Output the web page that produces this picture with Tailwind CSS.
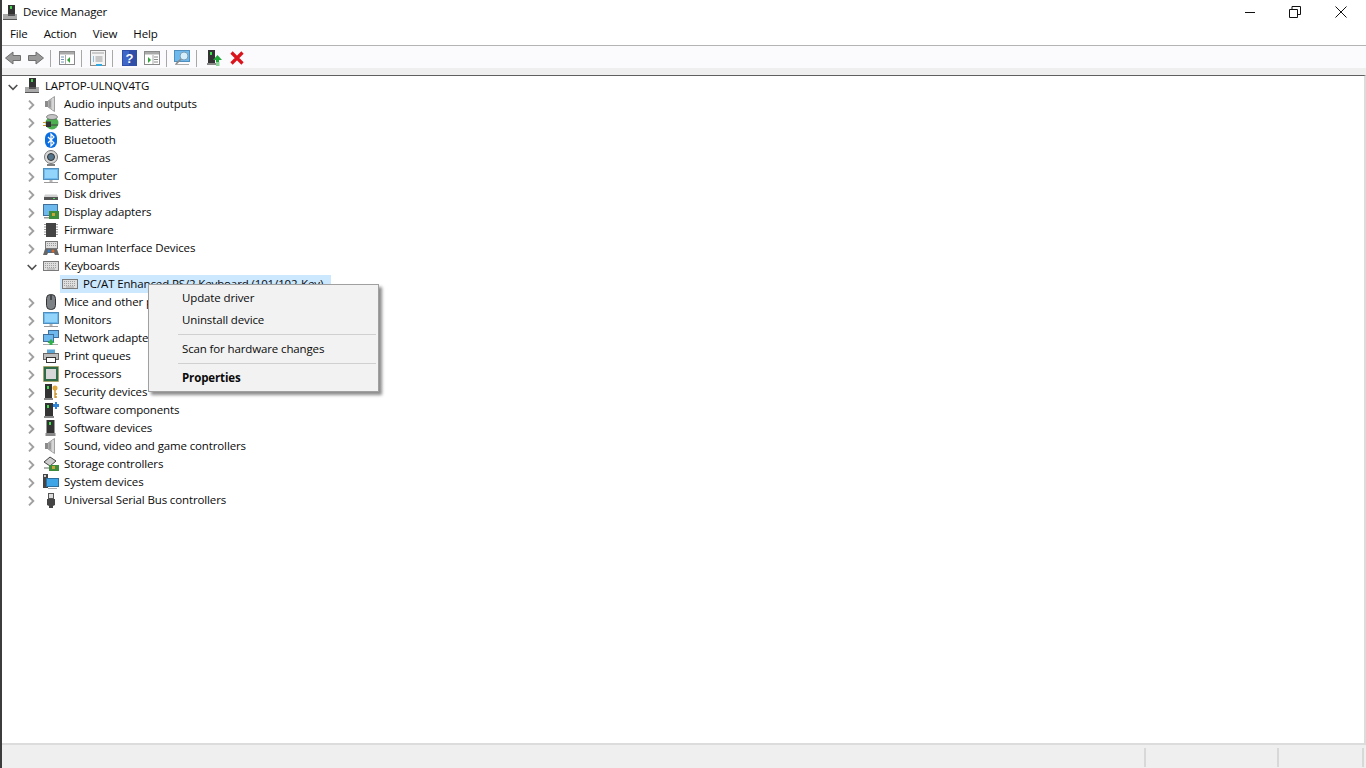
<!DOCTYPE html>
<html><head><meta charset="utf-8"><title>Device Manager</title>
<script src="https://cdn.jsdelivr.net/npm/@tailwindcss/browser@4"></script></head>
<body class="bg-white">
<svg class="hidden" width="0" height="0">
<defs>
<symbol id="chev" viewBox="0 0 10 10"><path d="M3 .7l4.300 4.300L3 9.300" fill="none" stroke="#a0a0a0" stroke-width="1.900"/></symbol>
<symbol id="chevd" viewBox="0 0 10 10"><path d="M.7 3l4.300 4.300L9.300 3" fill="none" stroke="#505050" stroke-width="1.600"/></symbol>
<symbol id="speaker" viewBox="0 0 16 16"><rect x="2" y="5" width="3" height="6" fill="#8a8a8a"/><path d="M5 5l6.500-4.500v15L5 11z" fill="#c4c4c4" stroke="#8f8f8f" stroke-width=".8"/><path d="M7 4.500v7" stroke="#8e8e8e" stroke-width="1.500"/><path d="M10 2v12" stroke="#e8e8e8"/></symbol>
<symbol id="monitor" viewBox="0 0 16 16"><rect x=".5" y=".5" width="15" height="11" fill="#6db9ee" stroke="#4f8fbe"/><rect x="2" y="2" width="12" height="8" fill="#92d4fa"/><rect x="6.500" y="12" width="3" height="2" fill="#b5b5b5"/><rect x="1" y="14" width="14" height="1" fill="#9a9a9a"/></symbol>
<symbol id="kbd" viewBox="0 0 16 16"><rect x=".5" y="3.500" width="15" height="9" fill="#dedede" stroke="#7a7a7a"/><path d="M2 5.500h12M2 7.500h12M2 9.500h12" stroke="#a0a0a0" stroke-dasharray="1 1"/><path d="M4 11h8" stroke="#a6a6a6"/></symbol>
<symbol id="tower" viewBox="0 0 16 16"><rect x="3.500" y="0" width="8" height="13" fill="#333"/><rect x="6" y="2" width="2" height="3" fill="#3fe04b"/><rect x="2.500" y="13" width="10" height="3" fill="#8a8a8a"/></symbol>
</defs>
</svg>
<div class="relative flex h-[768px] w-[1366px] flex-col overflow-hidden border-l-2 border-[#3c3c3c] font-['Open_Sans','Noto_Sans',sans-serif] text-[11.5px] tracking-[-0.13px] text-[#0a0a0a]">
  <!-- title bar -->
  <div class="flex h-[23px] items-center">
    <svg class="ml-[1px] h-[16px] w-[14px]" viewBox="0 0 14 16"><rect x="5" y="1" width="7" height="10" fill="#333"/><rect x="7" y="2" width="2" height="3" fill="#43d04f"/><rect x="0" y="10" width="14" height="6" fill="#a9a9a9"/><rect x="0" y="15" width="14" height="1" fill="#555"/><rect x="5" y="10" width="7" height="2" fill="#555"/></svg>
    <span class="ml-[6px]">Device Manager</span>
    <div class="ml-auto flex h-full items-center pr-[2px]">
      <svg class="mr-[33px] h-[12px] w-[12px]" viewBox="0 0 12 12"><path d="M1 6.500h10" stroke="#111"/></svg>
      <svg class="mr-[34px] h-[12px] w-[12px]" viewBox="0 0 12 12"><path d="M.5 3.500h8v8h-8zM3 3.500V.5h8.500v8H8.500" fill="none" stroke="#111"/></svg>
      <svg class="mr-[17px] h-[12px] w-[12px]" viewBox="0 0 12 12"><path d="M.5.5l11 11M11.500.5l-11 11" stroke="#111"/></svg>
    </div>
  </div>
  <!-- menu -->
  <div class="flex h-[23px] items-center gap-[16px] border-b border-[#b4b4b4] pl-[8px]">
    <span>File</span><span>Action</span><span>View</span><span>Help</span>
  </div>
  <!-- toolbar -->
  <div class="flex h-[22px] items-center bg-[#fbfbfd] pt-[2px]">
    <svg class="ml-[3px] h-[16px] w-[16px]" viewBox="0 0 16 16"><path d="M.5 8L8 2v3.500h7.500v5H8V14z" fill="#9a9a9a" stroke="#6e6e6e"/></svg>
    <svg class="ml-[7px] h-[16px] w-[16px]" viewBox="0 0 16 16"><path d="M15.500 8L8 2v3.500H.5v5H8V14z" fill="#9a9a9a" stroke="#6e6e6e"/></svg>
    <div class="ml-[6px] h-[17px] w-px bg-[#a8a8a8]"></div>
    <svg class="ml-[8px] h-[16px] w-[16px]" viewBox="0 0 16 16"><rect x=".5" y="1.500" width="15" height="13" fill="#fff" stroke="#8a8a8a"/><rect x="1" y="2" width="14" height="2.500" fill="#a9a9a9"/><path d="M2 7h3M2 9.500h3M2 12h3" stroke="#7396b8"/><path d="M6.500 5v9" stroke="#aaa"/><path d="M11 7v6L8 10z" fill="#35a33c"/></svg>
    <div class="ml-[6px] h-[17px] w-px bg-[#a8a8a8]"></div>
    <svg class="ml-[8px] h-[16px] w-[16px]" viewBox="0 0 16 16"><rect x=".5" y=".5" width="15" height="15" fill="#f4f4f4" stroke="#8c8c8c"/><rect x="2" y="2" width="12" height="2" fill="#ccc"/><path d="M3 7h1M3 9h1M3 11h1" stroke="#2a8fd0"/><path d="M5.500 7h7M5.500 9h7M5.500 11h7" stroke="#999"/><rect x="6" y="14" width="6" height="2" fill="#31a8e0"/></svg>
    <div class="ml-[6px] h-[17px] w-px bg-[#a8a8a8]"></div>
    <svg class="ml-[9px] h-[16px] w-[15px]" viewBox="0 0 15 16"><rect width="15" height="16" fill="#2f4fa8"/><rect x="1" y="1" width="6" height="14" fill="#3e67c8"/><text x="7.500" y="13" text-anchor="middle" font-size="13" font-weight="700" fill="#fff" font-family="Liberation Sans">?</text></svg>
    <svg class="ml-[7px] h-[16px] w-[16px]" viewBox="0 0 16 16"><rect x=".5" y="1.500" width="15" height="13" fill="#fff" stroke="#8a8a8a"/><rect x="1" y="2" width="14" height="2.500" fill="#a9a9a9"/><path d="M10 7h4M10 9.500h4M10 12h4" stroke="#8a8a8a"/><path d="M9 5v9" stroke="#aaa"/><path d="M4 7v6l3-3z" fill="#35a33c"/></svg>
    <div class="ml-[6px] h-[17px] w-px bg-[#a8a8a8]"></div>
    <svg class="ml-[7px] h-[16px] w-[16px]" viewBox="0 0 16 16"><rect x=".5" y=".5" width="15" height="11" fill="#6db9ee" stroke="#4f8fbe"/><rect x="1" y="14" width="14" height="1" fill="#aaa"/><circle cx="10" cy="6" r="4" fill="#d5eefb" stroke="#7a9db5"/><path d="M7 9l-5 5" stroke="#8a8a8a" stroke-width="1.700"/></svg>
    <div class="ml-[6px] h-[17px] w-px bg-[#a8a8a8]"></div>
    <svg class="ml-[10px] h-[16px] w-[16px]" viewBox="0 0 16 16"><rect x="1" y="0" width="7" height="13" fill="#333"/><rect x="3" y="2" width="2" height="3" fill="#3fe04b"/><rect x="0" y="13" width="9" height="2" fill="#888"/><path d="M10.500 5l4.500 5h-3v2H9v-2H6z" fill="#22a838"/><path d="M9 13h3.500M9 15h3.500" stroke="#22a838"/></svg>
    <svg class="ml-[6px] h-[16px] w-[16px]" viewBox="0 0 16 16"><path d="M2.500 2.500l11 11M13.500 2.500l-11 11" stroke="#d9141c" stroke-width="3.200"/></svg>
  </div>
  <div class="h-[7px] bg-[#efefef]"></div>
  <!-- tree -->
  <div class="flex-1 border-t border-t-[#5f5f5f] border-r-2 border-r-[#dcdcdc] border-b-2 border-b-[#dcdcdc] pt-px">
    <div class="flex h-[18px] items-center pl-[6px]">
      <svg class="mt-[1px] h-[10px] w-[10px]"><use href="#chevd"/></svg>
      <svg class="ml-[7px] h-[16px] w-[14px]" viewBox="0 0 14 16"><rect x="4" y="0" width="7" height="10" fill="#333"/><rect x="6" y="1" width="2" height="3" fill="#43d04f"/><rect x="0" y="9" width="14" height="6" fill="#a9a9a9"/><rect x="0" y="14" width="14" height="1" fill="#555"/><rect x="4" y="9" width="7" height="2" fill="#555"/></svg>
      <span class="ml-[6px]">LAPTOP-ULNQV4TG</span>
    </div>
    <div class="flex h-[18px] items-center pl-[24px]"><svg class="mt-[2px] h-[10px] w-[10px]"><use href="#chev"/></svg><svg class="ml-[7px] h-[16px] w-[16px]"><use href="#speaker"/></svg><span class="ml-[5px]">Audio inputs and outputs</span></div>
    <div class="flex h-[18px] items-center pl-[24px]"><svg class="mt-[2px] h-[10px] w-[10px]"><use href="#chev"/></svg><svg class="ml-[7px] h-[16px] w-[16px]" viewBox="0 0 16 16"><circle cx="9" cy="9" r="6.500" fill="#4caf50"/><ellipse cx="9" cy="3" rx="5.500" ry="2.500" fill="#c4c4c4" stroke="#555" stroke-width=".6"/><path d="M0 8.500h3M0 11.500h3" stroke="#c99a2e"/><path d="M3 7.500h5v5.500H3z" fill="#333"/><path d="M8 11h7" stroke="#444"/></svg><span class="ml-[5px]">Batteries</span></div>
    <div class="flex h-[18px] items-center pl-[24px]"><svg class="mt-[2px] h-[10px] w-[10px]"><use href="#chev"/></svg><svg class="ml-[7px] h-[16px] w-[16px]" viewBox="0 0 16 16"><rect x="2" y="0" width="12" height="16" rx="6" fill="#0a6ee0"/><path d="M5 5l6 6-3 3V2l3 3-6 6" fill="none" stroke="#fff" stroke-width="1.200"/></svg><span class="ml-[5px]">Bluetooth</span></div>
    <div class="flex h-[18px] items-center pl-[24px]"><svg class="mt-[2px] h-[10px] w-[10px]"><use href="#chev"/></svg><svg class="ml-[7px] h-[16px] w-[16px]" viewBox="0 0 16 16"><circle cx="8" cy="7" r="6.500" fill="#d8d8d8" stroke="#777"/><circle cx="8" cy="7" r="3.500" fill="#54748c" stroke="#333"/><path d="M4 15h8" stroke="#555" stroke-width="1.500"/></svg><span class="ml-[5px]">Cameras</span></div>
    <div class="flex h-[18px] items-center pl-[24px]"><svg class="mt-[2px] h-[10px] w-[10px]"><use href="#chev"/></svg><svg class="ml-[7px] h-[16px] w-[16px]"><use href="#monitor"/></svg><span class="ml-[5px]">Computer</span></div>
    <div class="flex h-[18px] items-center pl-[24px]"><svg class="mt-[2px] h-[10px] w-[10px]"><use href="#chev"/></svg><svg class="ml-[7px] h-[16px] w-[16px]" viewBox="0 0 16 16"><path d="M2 8.500h12l1 2v3H1v-3z" fill="#d0d0d0"/><rect x="1" y="11" width="14" height="3" fill="#555"/><rect x="10" y="12" width="2" height="1" fill="#4be05a"/></svg><span class="ml-[5px]">Disk drives</span></div>
    <div class="flex h-[18px] items-center pl-[24px]"><svg class="mt-[2px] h-[10px] w-[10px]"><use href="#chev"/></svg><svg class="ml-[7px] h-[16px] w-[16px]" viewBox="0 0 16 16"><rect x=".5" y=".5" width="14" height="11" fill="#6db9ee" stroke="#3f6f9a"/><rect x="1" y="13" width="8" height="1.500" fill="#999"/><rect x="6" y="7" width="10" height="8" fill="#3c8c3c"/><rect x="9" y="9" width="3" height="3" fill="#c9a53a"/></svg><span class="ml-[5px]">Display adapters</span></div>
    <div class="flex h-[18px] items-center pl-[24px]"><svg class="mt-[2px] h-[10px] w-[10px]"><use href="#chev"/></svg><svg class="ml-[7px] h-[16px] w-[16px]" viewBox="0 0 16 16"><rect x="3" y="1" width="10" height="14" fill="#444"/><path d="M1 2.500h2M1 5h2M1 7.500h2M1 10h2M1 12.500h2M13 2.500h2M13 5h2M13 7.500h2M13 10h2M13 12.500h2" stroke="#999"/></svg><span class="ml-[5px]">Firmware</span></div>
    <div class="flex h-[18px] items-center pl-[24px]"><svg class="mt-[2px] h-[10px] w-[10px]"><use href="#chev"/></svg><svg class="ml-[7px] h-[16px] w-[16px]" viewBox="0 0 16 16"><rect x="2.500" y="1.500" width="12" height="7" fill="#ddd" stroke="#777"/><path d="M4 3.500h9M4 5.500h9" stroke="#999" stroke-dasharray="1 1"/><path d="M2 9h12l2 6h-4l-1-2H5l-1 2H0z" fill="#666"/><circle cx="6" cy="11" r="1.500" fill="#2f7fd0"/><circle cx="10" cy="11" r="1.500" fill="#d06a2f"/></svg><span class="ml-[5px]">Human Interface Devices</span></div>
    <div class="flex h-[18px] items-center pl-[25px]"><svg class="mt-[1px] h-[10px] w-[10px]"><use href="#chevd"/></svg><svg class="ml-[6px] h-[16px] w-[16px]"><use href="#kbd"/></svg><span class="ml-[5px]">Keyboards</span></div>
    <div class="ml-[58px] flex h-[18px] w-[271px] items-center whitespace-nowrap bg-[#cce8ff] pl-[2px]"><svg class="h-[16px] w-[16px]"><use href="#kbd"/></svg><span class="ml-[5px]">PC/AT Enhanced PS/2 Keyboard (101/102-Key)</span></div>
    <div class="flex h-[18px] items-center pl-[24px]"><svg class="mt-[2px] h-[10px] w-[10px]"><use href="#chev"/></svg><svg class="ml-[7px] h-[16px] w-[16px]" viewBox="0 0 16 16"><rect x="3.500" y="0.500" width="9" height="15" rx="4" fill="#7d8287" stroke="#333"/><path d="M8 1v5" stroke="#333" stroke-width="1.500"/></svg><span class="ml-[5px]">Mice and other pointing devices</span></div>
    <div class="flex h-[18px] items-center pl-[24px]"><svg class="mt-[2px] h-[10px] w-[10px]"><use href="#chev"/></svg><svg class="ml-[7px] h-[16px] w-[16px]"><use href="#monitor"/></svg><span class="ml-[5px]">Monitors</span></div>
    <div class="flex h-[18px] items-center pl-[24px]"><svg class="mt-[2px] h-[10px] w-[10px]"><use href="#chev"/></svg><svg class="ml-[7px] h-[16px] w-[16px]" viewBox="0 0 16 16"><rect x="5.500" y=".5" width="10" height="7" fill="#6db9ee" stroke="#3f6f9a"/><rect x=".5" y="4.500" width="10" height="7" fill="#6db9ee" stroke="#3f6f9a"/><rect x="0" y="14" width="15" height="1" fill="#aaa"/><path d="M8 9l3.500 4h-2v2h-3v-2h-2z" fill="#2fb04a"/></svg><span class="ml-[5px]">Network adapters</span></div>
    <div class="flex h-[18px] items-center pl-[24px]"><svg class="mt-[2px] h-[10px] w-[10px]"><use href="#chev"/></svg><svg class="ml-[7px] h-[16px] w-[16px]" viewBox="0 0 16 16"><rect x="4" y="1.500" width="8" height="4" fill="#5aa7d8"/><rect x=".5" y="5.500" width="15" height="6" fill="#bdbdbd" stroke="#666"/><rect x="3.500" y="9.500" width="9" height="5" fill="#fff" stroke="#333"/></svg><span class="ml-[5px]">Print queues</span></div>
    <div class="flex h-[18px] items-center pl-[24px]"><svg class="mt-[2px] h-[10px] w-[10px]"><use href="#chev"/></svg><svg class="ml-[7px] h-[16px] w-[16px]" viewBox="0 0 16 16"><rect x=".5" y=".5" width="15" height="15" fill="#2f6b46" stroke="#b09a3a" stroke-dasharray="1 1"/><rect x="3" y="3" width="10" height="10" fill="#d8d8d8"/></svg><span class="ml-[5px]">Processors</span></div>
    <div class="flex h-[18px] items-center pl-[24px]"><svg class="mt-[2px] h-[10px] w-[10px]"><use href="#chev"/></svg><svg class="ml-[7px] h-[16px] w-[16px]" viewBox="0 0 16 16"><rect x="2" y="0" width="7" height="14" fill="#333"/><rect x="4" y="2" width="2" height="3" fill="#3fe04b"/><rect x="1" y="14" width="9" height="2" fill="#888"/><circle cx="12" cy="4" r="2.500" fill="#e0a93a"/><path d="M12 6v8M12 10h2M12 13h2" stroke="#c98f24" stroke-width="1.300"/></svg><span class="ml-[5px]">Security devices</span></div>
    <div class="flex h-[18px] items-center pl-[24px]"><svg class="mt-[2px] h-[10px] w-[10px]"><use href="#chev"/></svg><svg class="ml-[7px] h-[16px] w-[16px]" viewBox="0 0 16 16"><rect x="2" y="1" width="8" height="13" fill="#333"/><rect x="4" y="3" width="2" height="3" fill="#3fe04b"/><rect x="1" y="14" width="10" height="2" fill="#888"/><path d="M12 0h2v2h2v3h-2v2h-2V5h-2V2h2z" fill="#2f86d8"/></svg><span class="ml-[5px]">Software components</span></div>
    <div class="flex h-[18px] items-center pl-[24px]"><svg class="mt-[2px] h-[10px] w-[10px]"><use href="#chev"/></svg><svg class="ml-[7px] h-[16px] w-[16px]"><use href="#tower"/></svg><span class="ml-[5px]">Software devices</span></div>
    <div class="flex h-[18px] items-center pl-[24px]"><svg class="mt-[2px] h-[10px] w-[10px]"><use href="#chev"/></svg><svg class="ml-[7px] h-[16px] w-[16px]"><use href="#speaker"/></svg><span class="ml-[5px]">Sound, video and game controllers</span></div>
    <div class="flex h-[18px] items-center pl-[24px]"><svg class="mt-[2px] h-[10px] w-[10px]"><use href="#chev"/></svg><svg class="ml-[7px] h-[16px] w-[16px]" viewBox="0 0 16 16"><path d="M1 6l6-5 6 4-6 5z" fill="#ccc" stroke="#444"/><rect x="6" y="9" width="10" height="6" fill="#3c8c3c"/><rect x="9" y="10" width="3" height="3" fill="#c9a53a"/><path d="M1 12h5" stroke="#666"/></svg><span class="ml-[5px]">Storage controllers</span></div>
    <div class="flex h-[18px] items-center pl-[24px]"><svg class="mt-[2px] h-[10px] w-[10px]"><use href="#chev"/></svg><svg class="ml-[7px] h-[16px] w-[16px]" viewBox="0 0 16 16"><rect x="0" y="0" width="5" height="14" fill="#444"/><rect x="1" y="1" width="2" height="2" fill="#ccc"/><rect x="3.500" y="4.500" width="12" height="8" fill="#3ea6e6" stroke="#2a6f9e"/><rect x="5" y="14" width="9" height="1" fill="#aaa"/></svg><span class="ml-[5px]">System devices</span></div>
    <div class="flex h-[18px] items-center pl-[24px]"><svg class="mt-[2px] h-[10px] w-[10px]"><use href="#chev"/></svg><svg class="ml-[7px] h-[16px] w-[16px]" viewBox="0 0 16 16"><rect x="5.500" y="1.500" width="5" height="5" fill="#ddd" stroke="#555"/><path d="M4 7h8v6l-2 1v2H6v-2l-2-1z" fill="#444"/></svg><span class="ml-[5px]">Universal Serial Bus controllers</span></div>
  </div>
  <!-- status bar -->
  <div class="flex h-[23px] bg-[#efefef] pt-[2px]">
    <div class="flex-1 pb-[1px]"></div>
    <div class="my-[1px] w-[133px] border-l-2 border-[#d8d8d8]"></div>
    <div class="my-[1px] w-[85px] border-l-2 border-[#d8d8d8]"></div>
    <div class="my-[1px] w-[4px] border-l-2 border-[#d8d8d8]"></div>
  </div>
  <!-- context menu -->
  <div class="absolute left-[146px] top-[284px] h-[108px] w-[231px] border border-[#a0a0a0] bg-[#f2f2f2] pt-[2px] shadow-[3px_3px_3px_rgba(0,0,0,0.45)]">
    <div class="flex h-[22px] items-center pl-[33px]">Update driver</div>
    <div class="flex h-[22px] items-center pl-[33px]">Uninstall device</div>
    <div class="ml-[29px] mr-[2px] mt-[3px] mb-[3px] h-px bg-[#d0d0d0]"></div>
    <div class="flex h-[22px] items-center pl-[33px]">Scan for hardware changes</div>
    <div class="ml-[29px] mr-[2px] mt-[3px] mb-[3px] h-px bg-[#d0d0d0]"></div>
    <div class="flex h-[22px] items-center pl-[33px] font-bold">Properties</div>
  </div>
</div>
</body></html>
